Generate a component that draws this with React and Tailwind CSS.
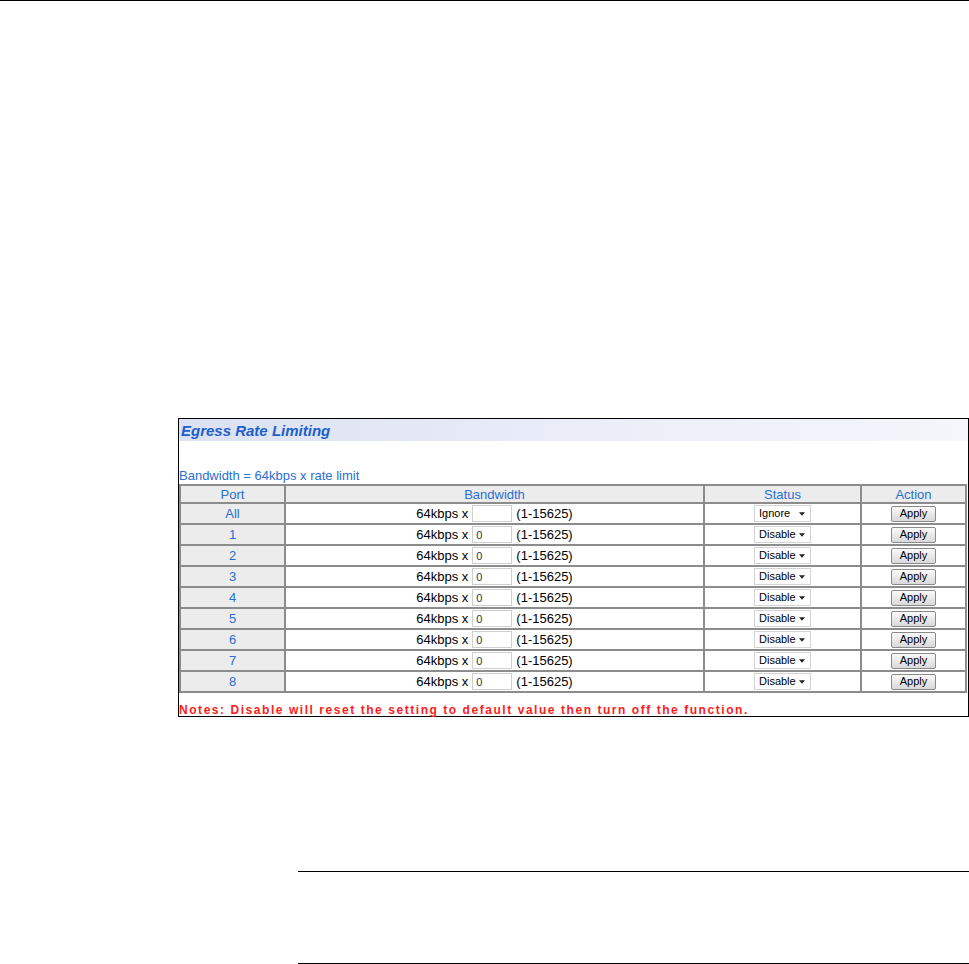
import { useState } from 'react';

// ── Data ───────────────────────────────────────────────────────────────────

const ROWS = [
  { port: 'All', value: '', status: 'Ignore' },
  { port: '1', value: '0', status: 'Disable' },
  { port: '2', value: '0', status: 'Disable' },
  { port: '3', value: '0', status: 'Disable' },
  { port: '4', value: '0', status: 'Disable' },
  { port: '5', value: '0', status: 'Disable' },
  { port: '6', value: '0', status: 'Disable' },
  { port: '7', value: '0', status: 'Disable' },
  { port: '8', value: '0', status: 'Disable' },
];

// ── Bits ───────────────────────────────────────────────────────────────────

function FakeSelect({ value }) {
  return (
    <div className="inline-flex items-center w-[57px] h-[17px] border border-[#d4d4d4] bg-white pl-[4px] align-middle">
      <span className="w-[40px] text-left text-[11px] leading-none text-black">{value}</span>
      <svg className="w-[6px] h-[4px]" viewBox="0 0 7 4" fill="#222">
        <path d="M0 0h7L3.5 4z" />
      </svg>
    </div>
  );
}

function ApplyButton() {
  return (
    <button className="w-[45px] h-[16px] border border-[#8a8a8a] rounded-[2px] bg-gradient-to-b from-[#fafafa] to-[#d9d9d9] text-[11px] leading-none text-black">
      Apply
    </button>
  );
}

function RateRow({ row }) {
  const [val, setVal] = useState(row.value);
  return (
    <tr className="h-[21px]">
      <td className="bg-[#ececec] border-2 border-[#8c8c8c] text-center text-[#2a6fd2]">{row.port}</td>
      <td className="border-2 border-[#8c8c8c] text-center">
        <span className="inline-flex items-center gap-[4px]">
          <span>64kbps x</span>
          <input
            value={val}
            onChange={(e) => setVal(e.target.value)}
            className="w-[40px] h-[17px] border border-[#cfcfcf] px-[3px] text-[11px] text-[#333] outline-none"
          />
          <span>(1-15625)</span>
        </span>
      </td>
      <td className="border-2 border-[#8c8c8c] text-center">
        <FakeSelect value={row.status} />
      </td>
      <td className="border-2 border-[#8c8c8c] text-center">
        <ApplyButton />
      </td>
    </tr>
  );
}

// ── Page ───────────────────────────────────────────────────────────────────

export default function App() {
  return (
    <div className="w-[969px] h-[964px] bg-white font-['Liberation_Sans',Arial,sans-serif] flex flex-col">
      <div className="h-[1px] bg-black shrink-0" />

      {/* Screenshot panel */}
      <div className="mt-[417px] ml-[178px] w-[791px] h-[299px] shrink-0 border border-black flex flex-col">
        <div className="h-[22px] shrink-0 bg-gradient-to-r from-[#dbe1f3] via-[#eaedf8] to-[#f5f6fb] flex items-center pl-[2px]">
          <span className="text-[15px] font-bold italic text-[#1d5fc9] leading-none">Egress Rate Limiting</span>
        </div>

        <div className="mt-[27px] shrink-0 text-[13px] leading-[16px] text-[#2a6fd2]">Bandwidth = 64kbps x rate limit</div>

        <table className="w-[788px] shrink-0 text-[13px] text-black leading-none">
          <thead>
            <tr className="h-[18px] bg-[#ececec] text-[#2a6fd2]">
              <th className="w-[105px] font-normal border-2 border-[#8c8c8c]">Port</th>
              <th className="w-[419px] font-normal border-2 border-[#8c8c8c]">Bandwidth</th>
              <th className="w-[157px] font-normal border-2 border-[#8c8c8c]">Status</th>
              <th className="font-normal border-2 border-[#8c8c8c]">Action</th>
            </tr>
          </thead>
          <tbody>
            {ROWS.map((r) => (
              <RateRow key={r.port} row={r} />
            ))}
          </tbody>
        </table>

        <div className="mt-[11px] shrink-0 text-[12px] font-bold text-[#ff1a1a] leading-none tracking-[1.55px] whitespace-nowrap">
          Notes: Disable will reset the setting to default value then turn off the function.
        </div>
      </div>

      {/* Bottom rules */}
      <div className="mt-[154px] ml-[298px] h-[1px] shrink-0 bg-black" />
      <div className="mt-[91px] ml-[298px] h-[1px] shrink-0 bg-black" />
    </div>
  );
}
